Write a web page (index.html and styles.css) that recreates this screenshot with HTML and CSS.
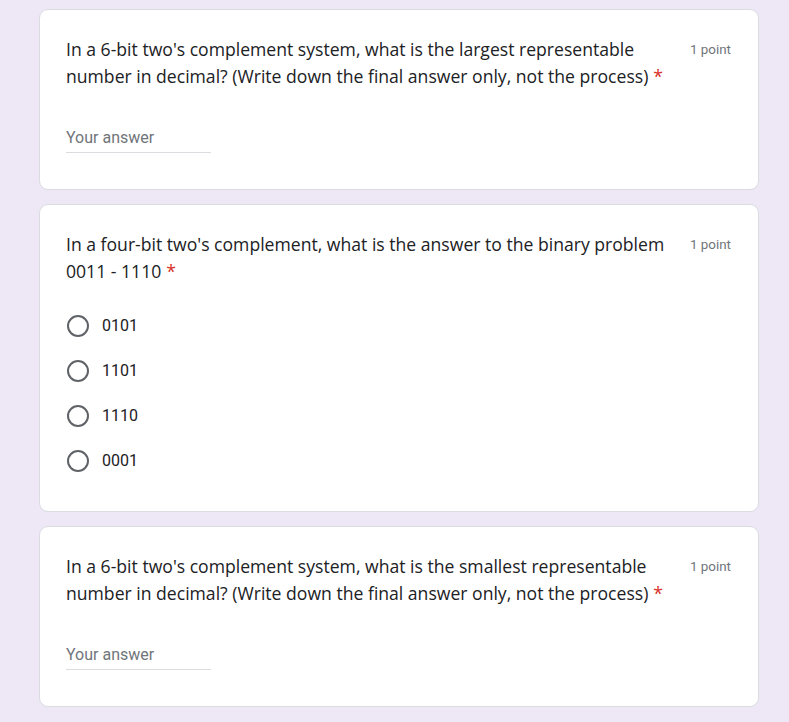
FILE: index.html
```html
<!DOCTYPE html>
<html>
<head>
<meta charset="utf-8">
<link rel="stylesheet" href="styles.css">
</head>
<body>
<main class="form">
  <section class="card">
    <div class="head">
      <div class="question">In a 6-bit two's complement system, what is the largest representable number in decimal? (Write down the final answer only, not the process)<span class="req">*</span></div>
      <div class="points">1 point</div>
    </div>
    <div class="answer"><span class="placeholder">Your answer</span></div>
  </section>

  <section class="card choice">
    <div class="head">
      <div class="question">In a four-bit two's complement, what is the answer to the binary problem 0011 - 1110<span class="req">*</span></div>
      <div class="points">1 point</div>
    </div>
    <ul class="options">
      <li class="option"><span class="radio"></span><span class="label">0101</span></li>
      <li class="option"><span class="radio"></span><span class="label">1101</span></li>
      <li class="option"><span class="radio"></span><span class="label">1110</span></li>
      <li class="option"><span class="radio"></span><span class="label">0001</span></li>
    </ul>
  </section>

  <section class="card">
    <div class="head">
      <div class="question">In a 6-bit two's complement system, what is the smallest representable number in decimal? (Write down the final answer only, not the process)<span class="req">*</span></div>
      <div class="points">1 point</div>
    </div>
    <div class="answer"><span class="placeholder">Your answer</span></div>
  </section>
</main>
</body>
</html>
```
FILE: styles.css
```css
html, body {
  margin: 0;
  padding: 0;
  background: #ede7f6;
}
.form {
  display: flex;
  flex-direction: column;
  gap: 14px;
  padding: 9px 0 0 39px;
}
.card {
  box-sizing: border-box;
  width: 720px;
  background: #fff;
  border: 1px solid #dadce0;
  border-radius: 9px;
  padding: 26px 26px 36px 26px;
}
.card.choice {
  padding-bottom: 28px;
}
.head {
  display: flex;
  align-items: flex-start;
}
.question {
  flex: 1;
  height: 54px;
  font-family: "Open Sans", sans-serif;
  font-size: 17.6px;
  line-height: 27px;
  color: #202124;
  padding-right: 24px;
}
.req {
  color: #d93025;
  margin-left: 5px;
}
.points {
  font-family: Roboto, sans-serif;
  font-size: 13.4px;
  line-height: 27px;
  color: #70757a;
  white-space: nowrap;
  margin-right: 1px;
}
.answer {
  margin-top: 31px;
  width: 145px;
  height: 31px;
  border-bottom: 1px solid #dadce0;
  display: flex;
  align-items: center;
}
.placeholder {
  font-family: Roboto, sans-serif;
  font-size: 16px;
  line-height: 20px;
  color: #70757a;
  margin-top: 3px;
}
.options {
  list-style: none;
  margin: 18px 0 0 0;
  padding: 0;
}
.option {
  height: 45px;
  display: flex;
  align-items: center;
}
.radio {
  box-sizing: border-box;
  width: 22px;
  height: 22px;
  border: 2.2px solid #5f6368;
  border-radius: 50%;
  margin-left: 1px;
}
.label {
  font-family: Roboto, sans-serif;
  font-size: 16px;
  color: #202124;
  margin-left: 13px;
}
```
